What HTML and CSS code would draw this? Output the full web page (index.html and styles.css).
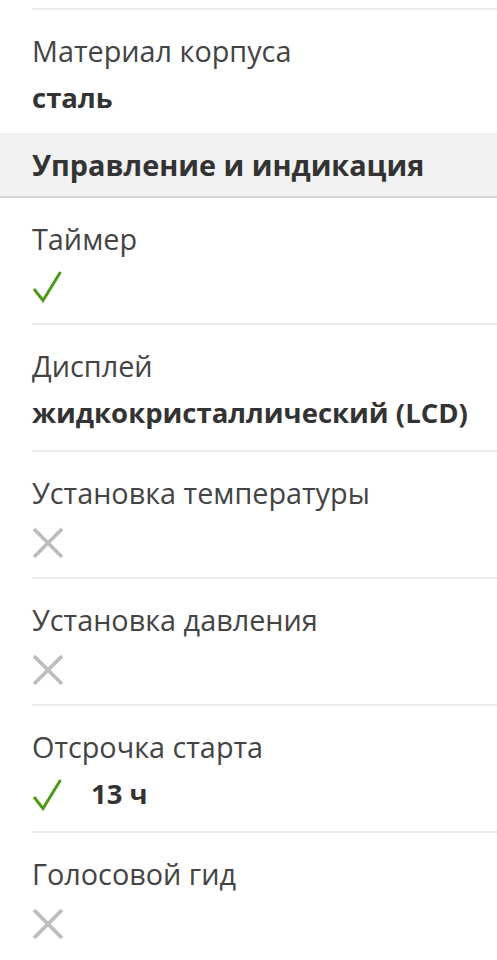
FILE: index.html
```html
<!DOCTYPE html>
<html lang="ru">
<head>
<meta charset="utf-8">
<link rel="stylesheet" href="styles.css">
</head>
<body>
<div class="specs">
  <div class="row first">
    <div class="label">Материал корпуса</div>
    <div class="value">сталь</div>
  </div>
  <div class="group">Управление и индикация</div>
  <div class="row">
    <div class="label">Таймер</div>
    <div class="value"><svg class="ico yes" viewBox="0 0 30 33"><path d="M2 19 L11 30.5 L28.5 2"/></svg></div>
  </div>
  <div class="row">
    <div class="label">Дисплей</div>
    <div class="value">жидкокристаллический (LCD)</div>
  </div>
  <div class="row">
    <div class="label">Установка температуры</div>
    <div class="value"><svg class="ico no" viewBox="0 0 32 32"><path d="M2 2 L30 30 M30 2 L2 30"/></svg></div>
  </div>
  <div class="row">
    <div class="label">Установка давления</div>
    <div class="value"><svg class="ico no" viewBox="0 0 32 32"><path d="M2 2 L30 30 M30 2 L2 30"/></svg></div>
  </div>
  <div class="row">
    <div class="label">Отсрочка старта</div>
    <div class="value"><svg class="ico yes" viewBox="0 0 30 33"><path d="M2 19 L11 30.5 L28.5 2"/></svg><span>13 ч</span></div>
  </div>
  <div class="row last">
    <div class="label">Голосовой гид</div>
    <div class="value"><svg class="ico no" viewBox="0 0 32 32"><path d="M2 2 L30 30 M30 2 L2 30"/></svg></div>
  </div>
</div>
</body>
</html>
```
FILE: styles.css
```css
html, body {
  margin: 0;
  padding: 0;
  background: #fff;
}
body {
  font-family: "Open Sans", "Noto Sans", sans-serif;
  color: #3a3a3a;
  overflow: hidden;
}
.specs {
  padding-top: 8px;
}
.row {
  margin-left: 32px;
  border-top: 2px solid #ececec;
  padding: 21px 0 17px;
}
.row.first {
  padding-bottom: 15px;
}
.label {
  font-size: 28.8px;
  line-height: 40px;
  color: #444;
}
.value {
  margin-top: 7px;
  font-size: 27.5px;
  line-height: 40px;
  height: 40px;
  font-weight: 700;
  color: #333;
  display: flex;
  align-items: center;
  gap: 29px;
}
.ico {
  flex: none;
}
.yes {
  width: 30px;
  height: 33px;
  fill: none;
  stroke: #4f9a1c;
  stroke-width: 3;
}
.no {
  width: 32px;
  height: 32px;
  margin-top: 6px;
  fill: none;
  stroke: #bdbdbd;
  stroke-width: 3.8;
}
.group {
  background: #f2f2f2;
  border-bottom: 2px solid #d4d4d4;
  padding: 12px 32px 11px;
  font-size: 28.8px;
  line-height: 40px;
  font-weight: 700;
  color: #333;
}
.group + .row {
  border-top: none;
}
```
